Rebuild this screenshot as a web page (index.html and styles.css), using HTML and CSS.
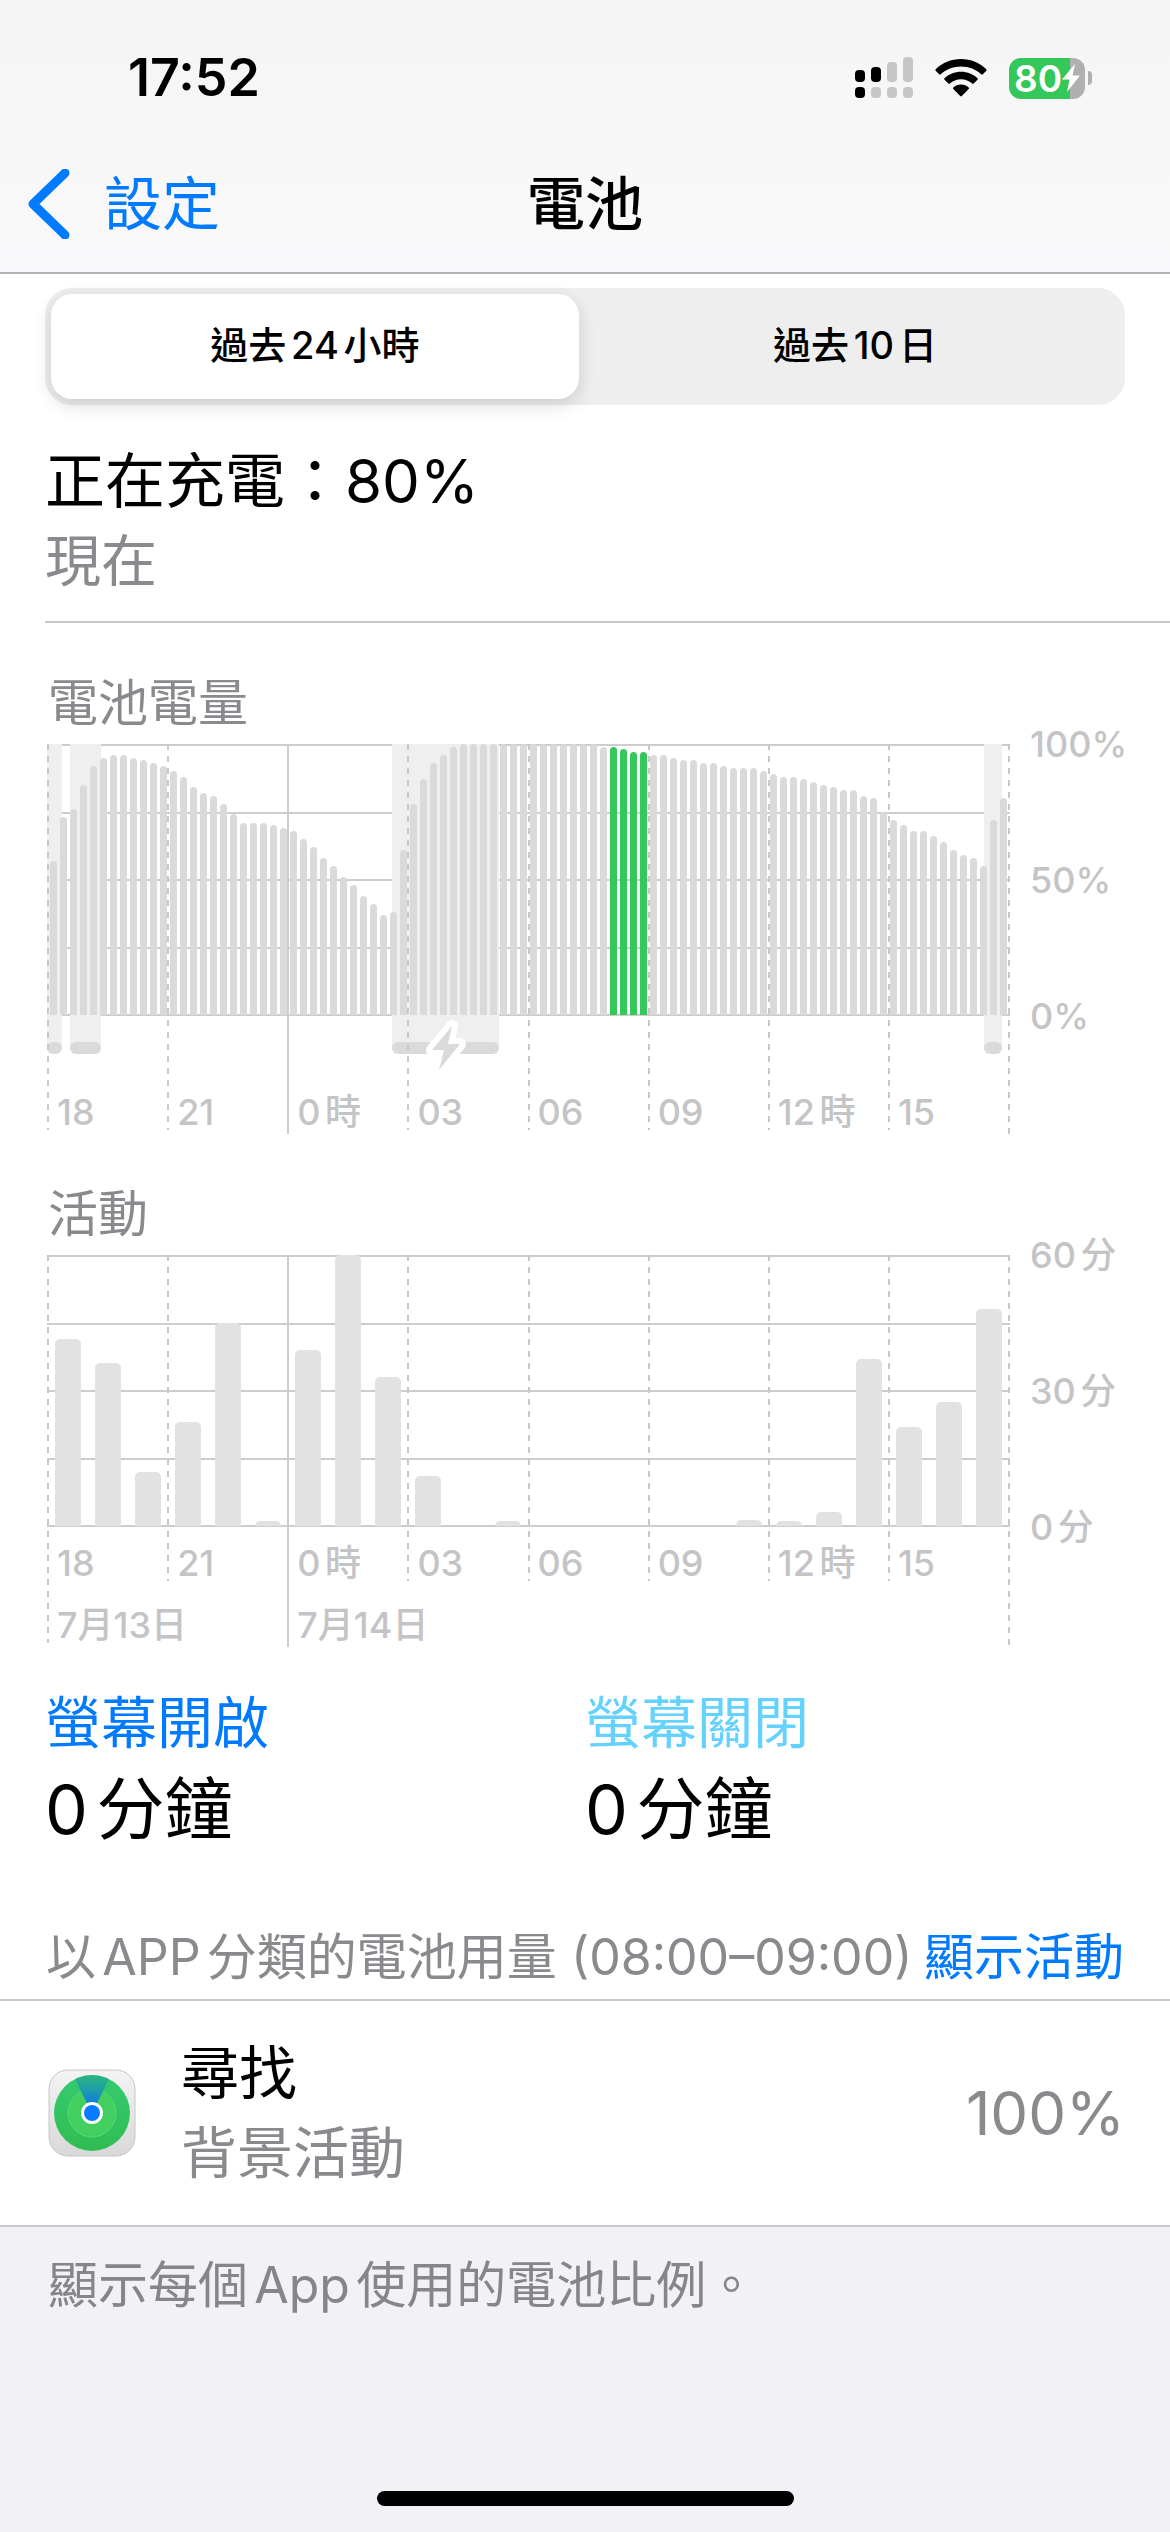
FILE: index.html
```html
<!DOCTYPE html>
<html lang="zh-Hant-HK">
<head>
    <meta charset="UTF-8">
    <meta name="viewport" content="width=device-width, initial-scale=1.0">
    <title>電池</title>
    <link rel="stylesheet" href="styles.css">
</head>
<body>

    <header class="header">
        <div class="status-bar">
            <span class="clock">17:52</span>
            <div class="status-icons">
                <svg class="signal" width="58" height="42" viewBox="0 0 58 42" aria-hidden="true">
                    <rect x="0" y="13" width="10" height="12" rx="4"/>
                    <rect x="16" y="10" width="10" height="15" rx="4"/>
                    <rect class="off" x="32" y="5" width="10" height="20" rx="4"/>
                    <rect class="off" x="48" y="0" width="10" height="25" rx="4"/>
                    <rect x="0" y="30" width="10" height="11" rx="4"/>
                    <rect class="off" x="16" y="30" width="10" height="11" rx="4"/>
                    <rect class="off" x="32" y="30" width="10" height="11" rx="4"/>
                    <rect class="off" x="48" y="30" width="10" height="11" rx="4"/>
                </svg>
                <svg class="wifi" width="52" height="38" viewBox="0 0 52 38" aria-hidden="true">
                    <path d="M26 0C36 0 45 4 51.300 10.200Q52 11 51.300 11.800L47.800 15.300Q47 16 46.200 15.300C41 10.300 34 7.500 26 7.500S11 10.300 5.800 15.300Q5 16 4.200 15.300L.7 11.800Q0 11 .7 10.200C7 4 16 0 26 0Z"/>
                    <path d="M26 12.800C32.500 12.800 38.200 15.300 42.500 19.200Q43.300 20 42.500 20.800L38.700 24.600Q38 25.300 37.200 24.600C34.200 21.900 30.300 20.300 26 20.300S17.800 21.900 14.800 24.600Q14 25.300 13.300 24.600L9.500 20.800Q8.700 20 9.500 19.200C13.800 15.300 19.500 12.800 26 12.800Z"/>
                    <path d="M26 25.600C29 25.600 31.700 26.700 33.700 28.500Q34.400 29.200 33.700 30L26.800 37Q26 37.800 25.200 37L18.300 30Q17.600 29.200 18.300 28.500C20.300 26.700 23 25.600 26 25.600Z"/>
                </svg>
                <div class="battery">
                    <div class="battery-body">
                        <span>80</span>
                        <svg width="18" height="28" viewBox="0 0 18 28" aria-hidden="true">
                            <path d="M13 0L0 15.500H7.500L5 28L18 11.500H10.500Z"/>
                        </svg>
                    </div>
                    <div class="battery-tip"></div>
                </div>
            </div>
        </div>
        <nav class="nav">
            <a class="back" href="#">
                <svg width="42" height="70" viewBox="0 0 42 70" aria-hidden="true">
                    <path d="M37 4L5 35L37 66"/>
                </svg>
                設定
            </a>
            <h1>電池</h1>
        </nav>
    </header>

    <main>
        <div class="segments">
            <button type="button" class="selected">過去24小時</button>
            <button type="button">過去10日</button>
        </div>

        <section class="charge">
            <p>正在充電：80%</p>
            <p class="secondary">現在</p>
        </section>

        <section class="charts">
            <h2>電池電量</h2>
            <div class="chart level-chart">
                <div class="plot">
                    <div class="lines"><i></i><i></i><i></i><i></i><i></i></div>
                    <div class="bands" id="bands"></div>
                    <div class="bars" id="levelBars"></div>
                    <div class="ticks">
                        <div class="tick">18</div>
                        <div class="tick">21</div>
                        <div class="tick midnight">0時</div>
                        <div class="tick">03</div>
                        <div class="tick">06</div>
                        <div class="tick">09</div>
                        <div class="tick">12時</div>
                        <div class="tick">15</div>
                        <div class="edge"></div>
                    </div>
                </div>
                <div class="axis">
                    <span>100%</span>
                    <span>50%</span>
                    <span>0%</span>
                </div>
            </div>

            <h2>活動</h2>
            <div class="chart activity-chart">
                <div class="plot">
                    <div class="lines"><i></i><i></i><i></i><i></i><i></i></div>
                    <div class="bars" id="activityBars"></div>
                    <div class="ticks">
                        <div class="tick">18<span class="date">7月13日</span></div>
                        <div class="tick">21</div>
                        <div class="tick midnight">0時<span class="date">7月14日</span></div>
                        <div class="tick">03</div>
                        <div class="tick">06</div>
                        <div class="tick">09</div>
                        <div class="tick">12時</div>
                        <div class="tick">15</div>
                        <div class="edge"></div>
                    </div>
                </div>
                <div class="axis">
                    <span>60分</span>
                    <span>30分</span>
                    <span>0分</span>
                </div>
            </div>
        </section>

        <section class="totals">
            <div>
                <h3 class="screen-on">螢幕開啟</h3>
                <p>0分鐘</p>
            </div>
            <div>
                <h3 class="screen-off">螢幕關閉</h3>
                <p>0分鐘</p>
            </div>
        </section>

        <div class="list-header">
            <h2>以APP分類的電池用量 (08:00–09:00)</h2>
            <button type="button">顯示活動</button>
        </div>
        <div class="app-row">
            <svg class="app-icon" width="88" height="88" viewBox="0 0 88 88" aria-hidden="true">
                <defs>
                    <linearGradient id="tile" x1="0" y1="0" x2="0" y2="1">
                        <stop offset="0" stop-color="#f4f4f4"/>
                        <stop offset="1" stop-color="#d8d8d8"/>
                    </linearGradient>
                    <linearGradient id="radar" x1="0" y1="0" x2="0" y2="1">
                        <stop offset="0" stop-color="#34cb70"/>
                        <stop offset="1" stop-color="#30bd52"/>
                    </linearGradient>
                    <linearGradient id="beam" x1="0" y1="0" x2="0" y2="1">
                        <stop offset="0" stop-color="#22a98a" stop-opacity="0.6"/>
                        <stop offset="0.6" stop-color="#1688cc"/>
                        <stop offset="1" stop-color="#087bdc"/>
                    </linearGradient>
                </defs>
                <rect x="1" y="1" width="86" height="86" rx="19" fill="url(#tile)" stroke="#c6c6c6"/>
                <circle cx="44" cy="44" r="38" fill="url(#radar)"/>
                <circle cx="44" cy="44" r="24" fill="#43cf60" stroke="#5bd873"/>
                <path d="M44 44L27 10Q44 2 61 10Z" fill="url(#beam)"/>
                <circle cx="44" cy="44" r="11" fill="#fff"/>
                <circle cx="44" cy="44" r="8" fill="#087aff"/>
            </svg>
            <div class="app-name">
                <p>尋找</p>
                <p class="secondary">背景活動</p>
            </div>
            <span class="app-share">100%</span>
        </div>
    </main>

    <footer class="footer">
        <p>顯示每個App使用的電池比例。</p>
        <div class="home-indicator"></div>
    </footer>

    <script>
// battery level in %, one value per 15 minutes
const levels = [
    57, 73, 76, 85, 92, 95, 96, 96, 95, 94, 93, 92,
    90, 88, 84, 82, 81, 78, 74, 71, 71, 71, 70, 69,
    68, 65, 62, 58, 55, 51, 48, 44, 41, 37, 38, 61,
    78, 87, 93, 96, 99, 100, 100, 100, 100, 100, 100, 100,
    100, 100, 100, 100, 100, 100, 100, 99, 99, 98, 97, 97,
    96, 96, 95, 94, 94, 93, 93, 92, 91, 91, 91, 90,
    89, 88, 88, 87, 86, 85, 84, 83, 83, 81, 80, 75,
    72, 70, 68, 68, 66, 64, 61, 59, 58, 55, 72, 80
];
// selected hour, 08:00-09:00
const selectedFrom = 56;
const selectedTo = 59;

// minutes of activity per hour
const activity = [41.5, 36, 12, 23, 45, 1, 39, 60, 33, 11, 0, 1, 0, 0, 0, 0, 0, 1.3, 1, 3, 37, 22, 27.5, 48];

// charging periods, minutes from the left edge
const charging = [
    { start: 0, end: 22 },
    { start: 34, end: 81 },
    { start: 516, end: 676, bolt: true },
    { start: 1401, end: 1428 }
];

function addBar(parent, percent, selected) {
    const bar = document.createElement('div');
    bar.className = selected ? 'bar active' : 'bar';
    bar.style.height = percent + '%';
    parent.appendChild(bar);
}

const levelBars = document.getElementById('levelBars');
levels.forEach((value, i) => addBar(levelBars, value, i >= selectedFrom && i <= selectedTo));

const activityBars = document.getElementById('activityBars');
activity.forEach(value => addBar(activityBars, value / 60 * 100, false));

const bands = document.getElementById('bands');
charging.forEach(period => {
    const band = document.createElement('div');
    band.className = 'band';
    band.style.left = period.start / 1440 * 100 + '%';
    band.style.width = (period.end - period.start) / 1440 * 100 + '%';
    band.innerHTML = '<div class="pill"></div>';
    if (period.bolt) {
        band.innerHTML += '<svg class="bolt" width="44" height="60" viewBox="0 0 44 60"><path d="M28 8L8 32H20L15 52L36 26H24Z"/></svg>';
    }
    bands.appendChild(band);
});
    </script>

</body>
</html>
```
FILE: styles.css
```css
* {
    box-sizing: border-box;
}
body {
    display: flex;
    flex-direction: column;
    min-height: 100vh;
    margin: 0;
    font-family: Inter, "Noto Sans CJK TC", sans-serif;
    text-autospace: normal;
    font-size: 60px;
    line-height: 80px;
    color: #000;
    background-color: #fff;
}
h1, h2, h3, p {
    margin: 0;
    font-weight: 400;
}
button {
    padding: 0;
    border: none;
    background: none;
    font-family: inherit;
    line-height: inherit;
    color: inherit;
    cursor: pointer;
}
.secondary {
    font-size: 56px;
    color: #8a8a8e;
}

/* Header */
.header {
    border-bottom: 2px solid #b2b2b6;
    background: linear-gradient(#f5f5f5, #f9f9fb);
}
.status-bar {
    display: flex;
    justify-content: space-between;
    align-items: center;
    height: 156px;
    padding: 0 78px 0 128px;
}
.clock {
    font-size: 52px;
    font-weight: 600;
}
.status-icons {
    display: flex;
    align-items: center;
    gap: 22px;
}
.signal .off {
    fill: #c6c6c6;
}
.battery {
    display: flex;
    align-items: center;
    gap: 3px;
}
.battery-body {
    display: flex;
    align-items: center;
    justify-content: center;
    width: 76px;
    height: 41px;
    border-radius: 12px;
    background: linear-gradient(to right, #34c759 80%, #b0b0b0 80%);
    color: #fff;
    font-size: 37px;
    font-weight: 600;
    line-height: 41px;
}
.battery-body svg {
    fill: #fff;
}
.battery-tip {
    width: 4px;
    height: 14px;
    border-radius: 0 4px 4px 0;
    background-color: #b0b0b0;
}
.nav {
    display: grid;
    grid-template-columns: 1fr auto 1fr;
    align-items: center;
    height: 116px;
    padding: 0 28px 20px;
    font-size: 58px;
}
.back {
    display: flex;
    align-items: center;
    gap: 34px;
    color: #007aff;
    text-decoration: none;
}
.back svg {
    fill: none;
    stroke: #007aff;
    stroke-width: 9px;
    stroke-linecap: round;
    stroke-linejoin: round;
}
.nav h1 {
    font-size: 58px;
    font-weight: 500;
}

/* Segmented control */
.segments {
    display: flex;
    gap: 12px;
    height: 117px;
    margin: 14px 45px 36px;
    padding: 6px;
    border-radius: 27px;
    background-color: #eee;
}
.segments button {
    flex: 1;
    padding-bottom: 4px;
    border-radius: 21px;
    font-size: 38px;
    font-weight: 500;
}
.segments .selected {
    background-color: #fff;
    box-shadow: 0 6px 18px rgba(0, 0, 0, 0.14);
}

.charge {
    margin-left: 45px;
    padding-bottom: 20px;
    border-bottom: 2px solid #c8c8ca;
}

/* Charts */
.charts h2 {
    margin-left: 48px;
    padding-top: 50px;
    font-size: 50px;
    line-height: 60px;
    color: #8a8a8e;
}
.chart {
    display: grid;
    grid-template-columns: 1fr 140px;
    gap: 20px;
    padding-left: 47px;
    margin-top: 11px;
    font-size: 36px;
    font-weight: 500;
    line-height: 36px;
    color: #c4c4c6;
}
.plot {
    display: grid;
}
/* all layers of a plot share one cell */
.plot > div {
    grid-area: 1 / 1;
    position: relative;
}
.lines, .axis {
    display: flex;
    flex-direction: column;
    justify-content: space-between;
    height: 272px;
}
.lines i {
    height: 2px;
    background-color: #cdcdcd;
}
.bars {
    display: flex;
    align-items: flex-end;
    justify-content: space-around;
    height: 271px;
    padding: 0 1px;
}
.bar {
    width: 7px;
    border-radius: 4px 4px 0 0;
    background-color: #dadada;
}
.bar.active {
    background-color: #34c759;
}
.activity-chart .bar {
    width: 26px;
    border-radius: 5px 5px 0 0;
    background-color: #e2e2e2;
}
.bands {
    height: 310px;
}
.band {
    position: absolute;
    display: flex;
    align-items: flex-end;
    justify-content: center;
    height: 310px;
    background: linear-gradient(#efefef 304px, transparent 304px);
}
.pill {
    flex: 1;
    height: 12px;
    border-radius: 6px;
    background-color: #dadada;
}
.bolt {
    position: absolute;
    bottom: -24px;
}
.bolt path {
    fill: #dadada;
    stroke: #fff;
    stroke-width: 12px;
    stroke-linejoin: round;
    paint-order: stroke;
}
.ticks {
    display: flex;
    align-items: flex-start;
}
.tick {
    flex: 1;
    width: 0;
    padding: 290px 0 0 10px;
    white-space: nowrap;
}
.level-chart .tick {
    padding-top: 350px;
}
.tick, .edge {
    background: repeating-linear-gradient(#c8c8c8 0 6px, transparent 6px 12px) 0 0 / 2px 100% no-repeat;
}
.tick.midnight {
    padding-bottom: 4px;
    background: linear-gradient(#cdcdcd, #cdcdcd) 0 0 / 2px 100% no-repeat;
}
.edge {
    width: 2px;
    align-self: stretch;
}
.date {
    display: block;
    padding-top: 26px;
    text-autospace: no-autospace;
}
.axis span {
    height: 0;
    line-height: 0;
}

/* Screen on / off */
.totals {
    display: grid;
    grid-template-columns: 1fr 1fr;
    padding: 36px 45px 62px;
}
.totals h3 {
    font-size: 56px;
}
.totals p {
    font-size: 68px;
    line-height: 92px;
}
.screen-on {
    color: #007aff;
}
.screen-off {
    color: #64d2ff;
}

/* App list */
.list-header {
    display: flex;
    justify-content: space-between;
    align-items: baseline;
    padding: 0 46px 2px;
    border-bottom: 2px solid #c8c8ca;
    white-space: nowrap;
}
.list-header h2 {
    font-size: 50px;
    color: #8a8a8e;
}
.list-header button {
    font-size: 50px;
    color: #007aff;
}
.app-row {
    display: flex;
    align-items: center;
    padding: 32px 45px 32px 48px;
    border-bottom: 2px solid #c8c8ca;
    font-size: 60px;
}
.app-name {
    flex: 1;
    margin-left: 45px;
    font-size: 58px;
}
.app-share {
    color: #8a8a8e;
}

.footer {
    display: flex;
    flex: 1;
    flex-direction: column;
    justify-content: space-between;
    padding: 18px 48px 26px;
    background-color: #f1f1f6;
    font-size: 50px;
    color: #85858a;
}
.home-indicator {
    align-self: center;
    width: 417px;
    height: 15px;
    border-radius: 8px;
    background-color: #000;
}
```
